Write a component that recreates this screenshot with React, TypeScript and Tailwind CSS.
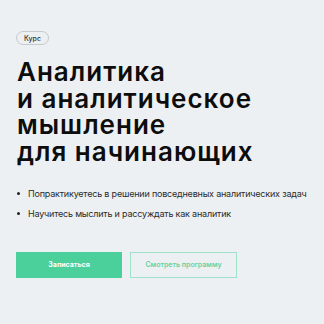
export default function App() {
  return (
    <div className="w-[324px] h-[324px] bg-[#edf0f3] overflow-hidden" style={{ fontFamily: "Inter, 'Noto Sans', sans-serif" }}>
      <div className="pl-[16px] pt-[31px] flex flex-col items-start">
        <div className="flex items-center justify-center h-[14px] w-[33px] rounded-full border border-[#c5cacf] text-[7px] leading-[7px] text-[#333] font-medium">
          Курс
        </div>
        <h1 className="mt-[14px] pl-[1px] text-[26px] leading-[26.7px] font-semibold text-[#0d0d0d] tracking-[1px]">
          Аналитика
          <br />и аналитическое
          <br />мышление
          <br />для начинающих
        </h1>
        <ul className="mt-[23px] flex flex-col gap-[10px] text-[9px] leading-[10px] text-[#2b2b2b] tracking-[-0.2px]">
          <li className="flex items-center">
            <span className="w-[3px] h-[3px] rounded-full bg-[#222] ml-[1px] mr-[8px] shrink-0" />
            Попрактикуетесь в решении повседневных аналитических задач
          </li>
          <li className="flex items-center">
            <span className="w-[3px] h-[3px] rounded-full bg-[#222] ml-[1px] mr-[8px] shrink-0" />
            Научитесь мыслить и рассуждать как аналитик
          </li>
        </ul>
        <div className="mt-[33px] flex gap-[8px]">
          <div className="w-[106px] h-[26px] bg-[#4bd09c] flex items-center justify-center text-white text-[7px] font-bold">
            Записаться
          </div>
          <div className="w-[107px] h-[26px] border border-[#9ee3c7] flex items-center justify-center text-[#5fd3a5] text-[7px] font-semibold">
            Смотреть программу
          </div>
        </div>
      </div>
    </div>
  );
}
